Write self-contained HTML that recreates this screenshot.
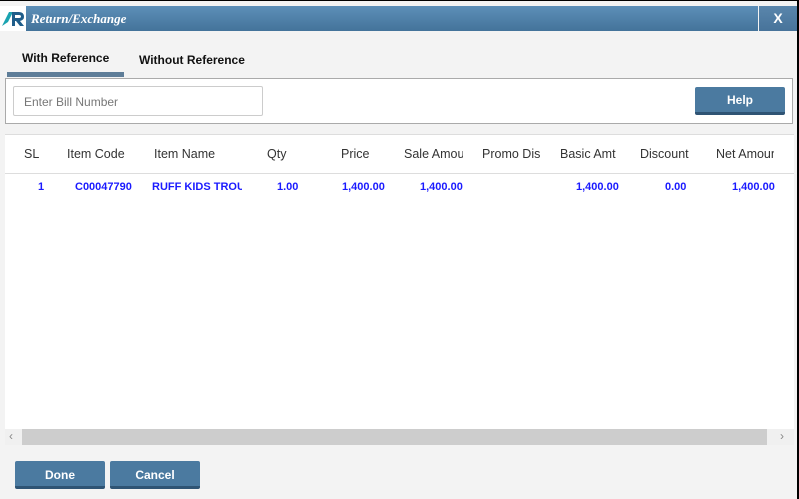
<!DOCTYPE html><html><head><style>
*{margin:0;padding:0;box-sizing:border-box}
body{width:799px;height:499px;background:#f3f3f3;font-family:"Liberation Sans",sans-serif;position:relative;overflow:hidden}
.a{position:absolute}
.title{left:26px;top:6px;width:732px;height:25px;background:linear-gradient(#5d8fb8,#44739a);color:#fff;font-family:"Liberation Serif",serif;font-style:italic;font-weight:bold;font-size:13px;line-height:25px;padding-left:5px}
.x{left:759px;top:6px;width:38px;height:25px;background:linear-gradient(#5a86ac,#47739a);color:#fff;font-weight:bold;font-size:14px;text-align:center;line-height:25px}
.btn{background:#4b7aa0;border-bottom:3px solid #2f5474;border-radius:2px;color:#fff;font-weight:bold;font-size:12px;text-align:center}
.th{top:147px;font-size:12.5px;color:#333}
.td{top:181px;font-size:11px;color:#1a1aff;font-weight:bold}
</style></head><body>
<div class="a" style="left:0;top:0;width:799px;height:1px;background:#000"></div>
<div class="a" style="left:797px;top:0;width:2px;height:499px;background:#000"></div>
<div class="a" style="left:0;top:6px;width:26px;height:25px;background:#fff"><svg width="26" height="25"><path d="M2 20 L9 6 L13 6 L8 16 Z" fill="#1aa3b0"/><path d="M12 20 L12 6 L19 6 Q24 6 24 11 Q24 14 20 15 L24 20 L20 20 L16 15 L15 15 L15 20 Z M15 9 L15 12 L19 12 Q21 12 21 10.5 Q21 9 19 9 Z" fill="#1f5d8a"/></svg></div>
<div class="a title">Return/Exchange</div>
<div class="a x">X</div>
<div class="a" style="left:22px;top:51px;font-size:12px;font-weight:bold;color:#111">With Reference</div>
<div class="a" style="left:139px;top:53px;font-size:12px;font-weight:bold;color:#111">Without Reference</div>
<div class="a" style="left:7px;top:72px;width:117px;height:5px;background:#5e7d98"></div>
<div class="a" style="left:5px;top:78px;width:788px;height:46px;background:#fff;border:1px solid #aaa"></div>
<div class="a" style="left:13px;top:86px;width:250px;height:30px;background:#fff;border:1px solid #ccc;border-radius:2px;font-size:12px;color:#777;padding:8px 10px">Enter Bill Number</div>
<div class="a btn" style="left:695px;top:87px;width:90px;height:28px;line-height:26px">Help</div>
<div class="a" style="left:5px;top:134px;width:789px;height:311px;background:#fff;border-top:1px solid #ddd"></div>
<div class="a" style="left:5px;top:173px;width:789px;height:1px;background:#ddd"></div>
<div class="a th" style="left:24px">SL</div>
<div class="a th" style="left:67px">Item Code</div>
<div class="a th" style="left:154px">Item Name</div>
<div class="a th" style="left:267px">Qty</div>
<div class="a th" style="left:341px">Price</div>
<div class="a th" style="left:404px;width:59px;overflow:hidden;white-space:nowrap">Sale Amount</div>
<div class="a th" style="left:482px;width:58px;overflow:hidden;white-space:nowrap">Promo Disc</div>
<div class="a th" style="left:560px">Basic Amt</div>
<div class="a th" style="left:640px">Discount</div>
<div class="a th" style="left:716px;width:58px;overflow:hidden;white-space:nowrap">Net Amount</div>
<div class="a td" style="left:38px">1</div>
<div class="a td" style="left:75px">C00047790</div>
<div class="a td" style="left:152px;width:90px;overflow:hidden;white-space:nowrap">RUFF KIDS TROUSER</div>
<div class="a td" style="left:277px">1.00</div>
<div class="a td" style="left:342px">1,400.00</div>
<div class="a td" style="left:420px">1,400.00</div>
<div class="a td" style="left:576px">1,400.00</div>
<div class="a td" style="left:665px">0.00</div>
<div class="a td" style="left:732px">1,400.00</div>
<div class="a" style="left:5px;top:429px;width:789px;height:16px;background:#f0f0f0"></div>
<div class="a" style="left:22px;top:429px;width:745px;height:16px;background:#cdcdcd"></div>
<div class="a" style="left:9px;top:429px;font-size:12px;color:#888">‹</div>
<div class="a" style="left:780px;top:429px;font-size:12px;color:#888">›</div>
<div class="a btn" style="left:15px;top:461px;width:90px;height:28px;line-height:28px">Done</div>
<div class="a btn" style="left:110px;top:461px;width:90px;height:28px;line-height:28px">Cancel</div>
</body></html>
